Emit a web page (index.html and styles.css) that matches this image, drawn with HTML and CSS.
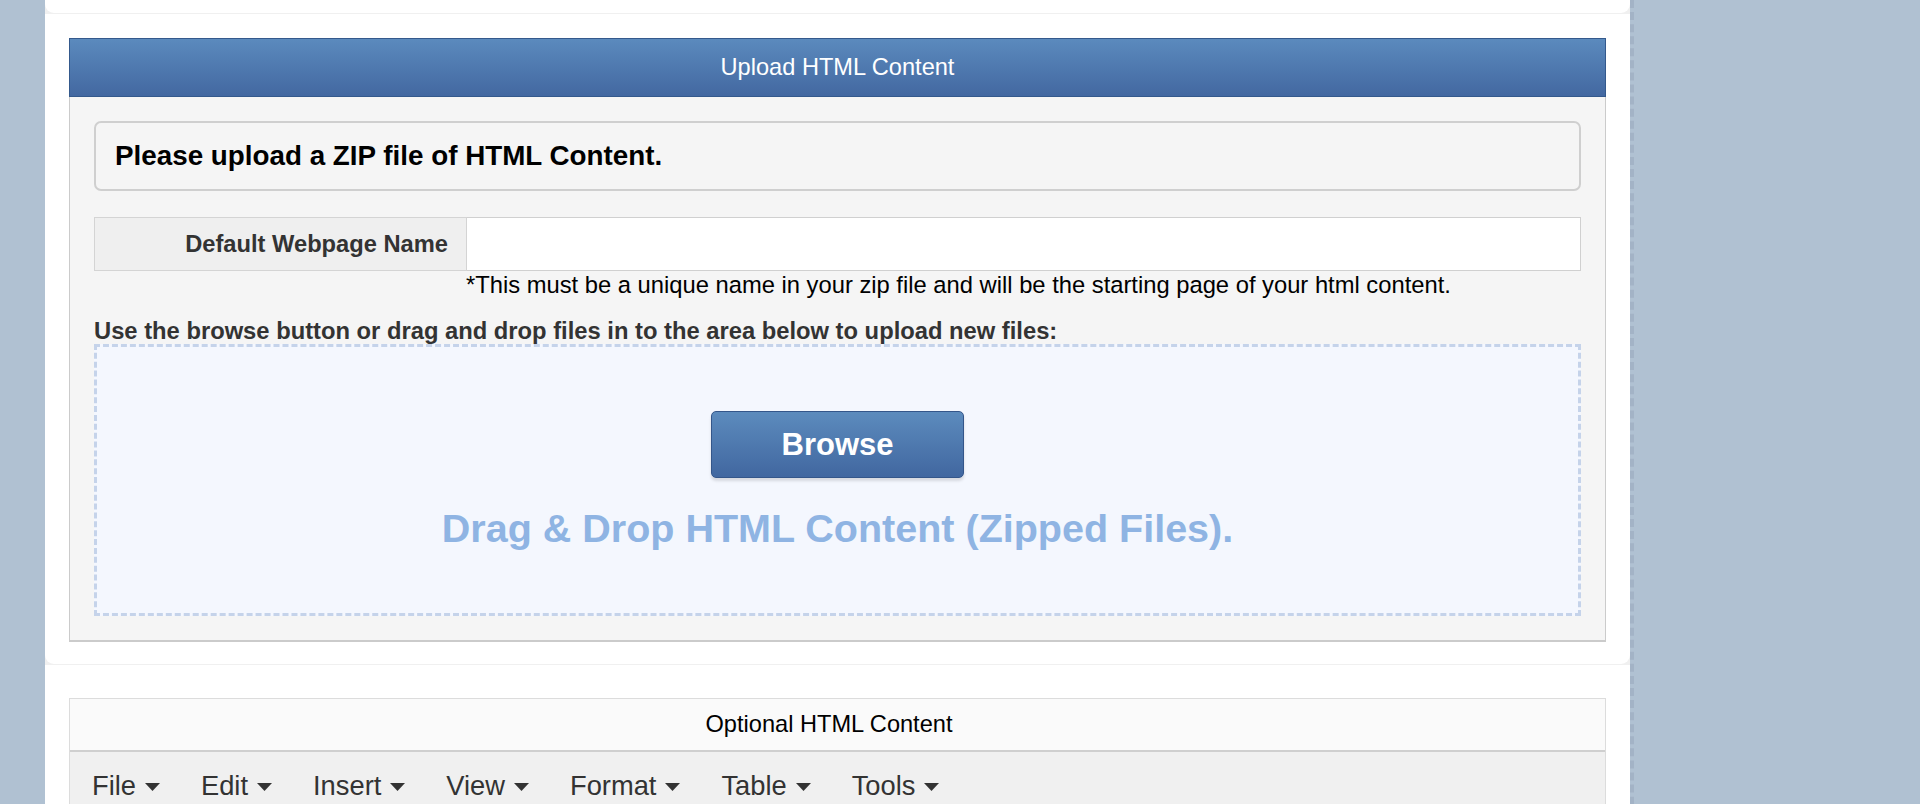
FILE: index.html
```html
<!DOCTYPE html>
<html lang="en">
<head>
<meta charset="utf-8">
<title>Upload HTML Content</title>
<link rel="stylesheet" href="styles.css">
</head>
<body>
<div class="page">
  <div class="card card-top"></div>
  <div class="card card-upload">
    <div class="panel">
      <div class="panel-head">Upload HTML Content</div>
      <div class="panel-body">
        <div class="notice">Please upload a ZIP file of HTML Content.</div>
        <div class="field">
          <label class="field-label" for="pagename">Default Webpage Name</label>
          <div class="field-input"><input id="pagename" type="text"></div>
        </div>
        <div class="hint">*This must be a unique name in your zip file and will be the starting page of your html content.</div>
        <div class="drop-label">Use the browse button or drag and drop files in to the area below to upload new files:</div>
        <div class="dropzone">
          <button class="browse" type="button">Browse</button>
          <div class="drop-text">Drag &amp; Drop HTML Content (Zipped Files).</div>
        </div>
      </div>
    </div>
  </div>
  <div class="card card-optional">
    <div class="editor">
      <div class="editor-head">Optional HTML Content</div>
      <div class="menubar">
        <div class="menu-item"><span>File</span><svg class="caret" viewBox="0 0 15 8"><path d="M0 0H15L7.5 8Z"/></svg></div>
        <div class="menu-item"><span>Edit</span><svg class="caret" viewBox="0 0 15 8"><path d="M0 0H15L7.5 8Z"/></svg></div>
        <div class="menu-item"><span>Insert</span><svg class="caret" viewBox="0 0 15 8"><path d="M0 0H15L7.5 8Z"/></svg></div>
        <div class="menu-item"><span>View</span><svg class="caret" viewBox="0 0 15 8"><path d="M0 0H15L7.5 8Z"/></svg></div>
        <div class="menu-item"><span>Format</span><svg class="caret" viewBox="0 0 15 8"><path d="M0 0H15L7.5 8Z"/></svg></div>
        <div class="menu-item"><span>Table</span><svg class="caret" viewBox="0 0 15 8"><path d="M0 0H15L7.5 8Z"/></svg></div>
        <div class="menu-item"><span>Tools</span><svg class="caret" viewBox="0 0 15 8"><path d="M0 0H15L7.5 8Z"/></svg></div>
      </div>
    </div>
  </div>
</div>
</body>
</html>
```

FILE: styles.css
```css
* { box-sizing: border-box; }

html, body {
  margin: 0;
  height: 100%;
  overflow: hidden;
}

body {
  background: #b0c1d2;
  font-family: "Liberation Sans", Arial, sans-serif;
  color: #000;
}

.page {
  margin-left: 45px;
  width: 1589px;
  min-height: 804px;
  background: #f0f0f0;
  background-clip: padding-box;
  border-right: 4px dashed #a3b3c6;
}

.card {
  background: #fff;
  border-radius: 0 0 9px 9px;
}

.card-top {
  height: 13px;
  margin-bottom: 1px;
}

.card-upload {
  padding: 24px 24px 22px;
  margin-bottom: 1px;
}

.panel-head {
  height: 59px;
  border: 1px solid #34598c;
  background: linear-gradient(#5b8abd, #4368a1);
  color: #fff;
  font-size: 23.6px;
  display: flex;
  align-items: center;
  justify-content: center;
}

.panel-body {
  background: #f5f5f5;
  border: 1px solid #cbcbcb;
  border-top: 0;
  border-bottom-width: 2px;
  padding: 24px 24px 24px;
}

.notice {
  height: 70px;
  border: 2px solid #cfcfcf;
  border-radius: 7px;
  padding: 0 19px;
  display: flex;
  align-items: center;
  font-weight: bold;
  font-size: 27.8px;
  color: #000;
}

.field {
  display: flex;
  height: 54px;
  margin-top: 26px;
}

.field-label {
  width: 373px;
  background: #efefef;
  border: 1px solid #d4d4d4;
  display: flex;
  align-items: center;
  justify-content: flex-end;
  padding-right: 18px;
  font-weight: bold;
  font-size: 23.7px;
  color: #333;
}

.field-input {
  flex: 1;
  background: #fff;
  border: 1px solid #d0d0d0;
  border-left: 0;
}

.field-input input {
  width: 100%;
  height: 100%;
  border: 0;
  outline: 0;
  background: transparent;
  font: 23.5px "Liberation Sans", Arial, sans-serif;
  padding: 0 10px;
}

.hint {
  padding-left: 372px;
  font-size: 23.75px;
  line-height: 27px;
  color: #000;
}

.drop-label {
  margin-top: 20px;
  font-weight: bold;
  font-size: 23.75px;
  line-height: 26px;
  color: #333;
}

.dropzone {
  border: 3px dashed #c5d3ea;
  background: #f4f7fe;
  padding: 64px 0 62px;
  display: flex;
  flex-direction: column;
  align-items: center;
}

.browse {
  width: 253px;
  height: 67px;
  border: 1px solid #34568a;
  border-radius: 5px;
  background: linear-gradient(#5c8bbd, #4167a0);
  color: #fff;
  font: bold 31px "Liberation Sans", Arial, sans-serif;
  box-shadow: 0 3px 3px rgba(0, 0, 0, 0.12);
  padding: 0;
}

.drop-text {
  margin-top: 28px;
  font-weight: bold;
  font-size: 39.5px;
  line-height: 45px;
  color: #8fb4e3;
}

.card-optional {
  padding: 33px 24px 0;
  min-height: 200px;
  border-radius: 0;
}

.editor {
  border: 1px solid #dcdcdc;
}

.editor-head {
  height: 53px;
  background: #fafafa;
  border-bottom: 2px solid #cfcfcf;
  display: flex;
  align-items: center;
  justify-content: center;
  padding-right: 17px;
  font-size: 23.6px;
  color: #000;
}

.menubar {
  background: #f0f0f0;
  height: 90px;
  display: flex;
  align-items: flex-start;
  padding: 18px 0 0 22px;
}

.menu-item {
  display: flex;
  align-items: center;
  margin-right: 41px;
  font-size: 27.3px;
  line-height: 32px;
  color: #333;
}

.caret {
  width: 15px;
  height: 8px;
  margin-left: 9px;
  margin-top: 2px;
  fill: #333;
}
```
